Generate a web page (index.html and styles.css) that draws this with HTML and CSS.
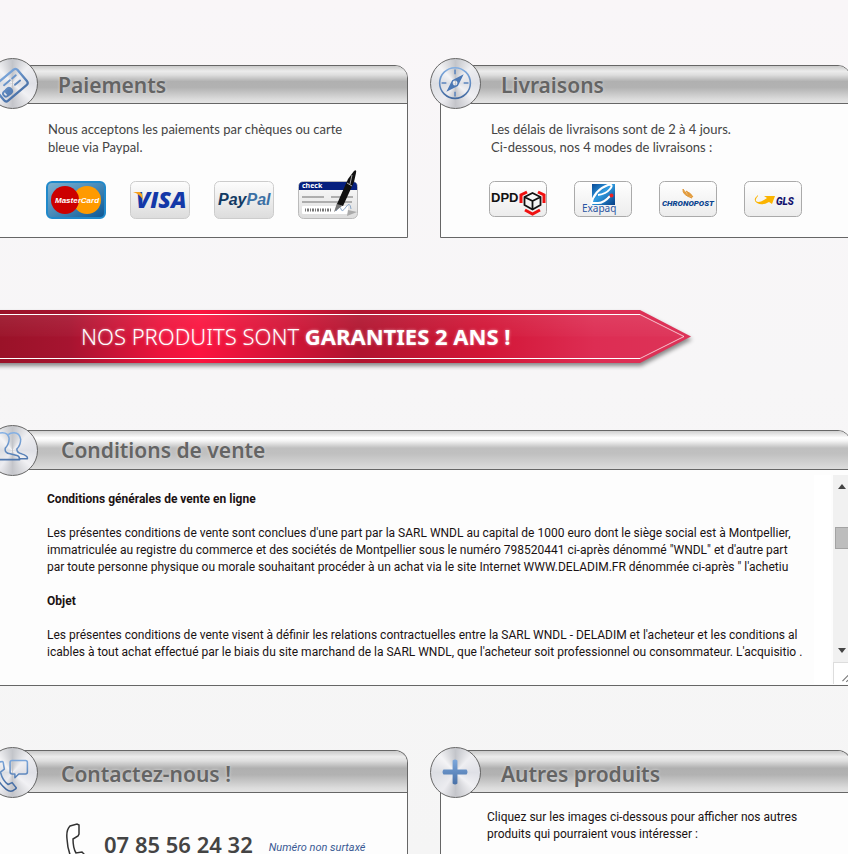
FILE: index.html
```html
<!DOCTYPE html>
<html lang="fr">
<head>
<meta charset="utf-8">
<title>Deladim</title>
<link rel="stylesheet" href="styles.css">
</head>
<body>
<svg class="defs" width="0" height="0" aria-hidden="true">
  <defs>
    <linearGradient id="blue" gradientUnits="userSpaceOnUse" x1="0" y1="8" x2="0" y2="42"><stop offset="0" stop-color="#84b0e4"/><stop offset="1" stop-color="#41689f"/></linearGradient>
    <linearGradient id="card" x1="0" y1="0" x2="0" y2="1"><stop offset="0" stop-color="#fdfdfd"/><stop offset="1" stop-color="#dcdcdc"/></linearGradient>
    <linearGradient id="ship" x1="0" y1="0" x2="0" y2="1"><stop offset="0" stop-color="#fff"/><stop offset="1" stop-color="#ececec"/></linearGradient>
    <linearGradient id="mc" x1="0" y1="0" x2="1" y2="1"><stop offset="0" stop-color="#7fb2d0"/><stop offset=".5" stop-color="#4689b8"/><stop offset="1" stop-color="#0b5694"/></linearGradient>
    <linearGradient id="exa" x1="0" y1="0" x2="1" y2="1"><stop offset="0" stop-color="#0a4a96"/><stop offset=".45" stop-color="#2f9be0"/><stop offset="1" stop-color="#063c83"/></linearGradient>
  </defs>
</svg>
<main class="page">
  <div class="row">
    <section class="panel">
      <header class="bar">
        <span class="badge"><svg viewBox="0 0 51 51"><g fill="none" stroke="url(#blue)" stroke-width="2.4" stroke-linecap="round" transform="rotate(-40 26 26)"><rect x="8" y="15" width="31" height="21" rx="3"/><path d="M18 21h8M29 21h5M27 28h7" stroke-width="2"/><circle cx="14" cy="29" r="3" stroke-width="2"/><circle cx="18" cy="29" r="3" fill="#5681bb"/></g></svg></span>
        <h2>Paiements</h2>
      </header>
      <div class="body">
        <p class="intro">Nous acceptons les paiements par chèques ou carte<br>bleue via Paypal.</p>
        <div class="logos">
          <svg class="pay" viewBox="0 0 60 50" role="img" aria-label="MasterCard"><rect x="1" y="13" width="58" height="36" rx="5" fill="url(#mc)" stroke="#2089cb" stroke-width="2"/><circle cx="41" cy="31" r="14" fill="#ff9a00"/><circle cx="19" cy="31" r="14" fill="#c00"/><text x="9" y="34" class="mc">MasterCard</text></svg>
          <svg class="pay" viewBox="0 0 60 50" role="img" aria-label="Visa"><rect x=".5" y="12.500" width="59" height="37" rx="5" fill="url(#card)" stroke="#ccc"/><text x="6" y="39" class="visa">VISA</text><path d="M3 23h7l2 2 1 6q-3-6-10-8z" fill="#f7a11b"/></svg>
          <svg class="pay" viewBox="0 0 60 50" role="img" aria-label="PayPal"><rect x=".5" y="12.500" width="59" height="37" rx="5" fill="url(#card)" stroke="#ccc"/><text x="4" y="36" class="paypal">Pay<tspan fill="#3b70a5">Pal</tspan></text></svg>
          <svg class="pay" viewBox="0 0 60 50" role="img" aria-label="Chèque"><rect x=".5" y="12.500" width="59" height="37" rx="5" fill="url(#card)" stroke="#bbb"/><path d="M1 21v-4q0-4 4-4h50q4 0 4 4v4z" fill="#06207e"/><text x="4" y="19" class="check">check</text><path d="M4 28h22M33 28h22M4 33h50" stroke="#999" stroke-width="1.400"/><rect x="4" y="37" width="46" height="8" rx="1" fill="#fff"/><path d="M7 41h27" stroke="#777" stroke-width="3" stroke-dasharray="1 1 2 1"/><path d="M38 42q4-6 5-2t5-2 5 2" fill="none" stroke="#8aa7c8"/><path d="M50 41l9 2-10 4z" fill="#aaa"/><path d="M36 43l3-9 5 3z" fill="#777"/><path d="M39 35L50 10l6-8q3-2 2 2l-2 9-11 24z" fill="#111"/><path d="M49 14l5 3M54 6l-2 9" stroke="#aaa"/></svg>
        </div>
      </div>
    </section>
    <section class="panel">
      <header class="bar">
        <span class="badge"><svg viewBox="0 0 51 51"><circle cx="25" cy="25" r="16" fill="none" stroke="url(#blue)" stroke-width="1.600"/><path d="M25 11v5M25 34v5M11 25h5M34 25h5" stroke="#5b84bd" stroke-width="1.600"/><path fill-rule="evenodd" d="M34 16l-6 12-12 6 6-12zM25 22.500a2.500 2.500 0 1 0 .1 0z" fill="#4c78b5"/></svg></span>
        <h2>Livraisons</h2>
      </header>
      <div class="body">
        <p class="intro">Les délais de livraisons sont de 2 à 4 jours.<br>Ci-dessous, nos 4 modes de livraisons :</p>
        <div class="logos ships">
          <svg class="ship" viewBox="0 0 58 36" role="img" aria-label="DPD"><rect x=".5" y=".5" width="57" height="35" rx="5" fill="url(#ship)" stroke="#aaa"/><text x="2" y="21" class="dpd">DPD</text><g fill="none" stroke="#ef1111" stroke-width="3"><path d="M38 11l-6 3v8M49 11l6 3v8M36 29l7.500 4 7.500-4"/></g><path d="M43.500 12l8 4v8l-8 4.500-8-4.500v-8zM35.500 16l8 4 8-4M43.500 20v8" fill="none" stroke="#111" stroke-width="1.800"/></svg>
          <svg class="ship" viewBox="0 0 58 36" role="img" aria-label="Exapaq"><rect x=".5" y=".5" width="57" height="35" rx="5" fill="url(#ship)" stroke="#aaa"/><path d="M18 3h23v21H18z" fill="url(#exa)"/><path d="M17 24q3-15 17-20 6-1 2 4-4 5-12 6M18 22h6q6 0 12-7" fill="none" stroke="#fff" stroke-width="2"/><circle cx="37.500" cy="14.500" r="2" fill="#e22"/><text x="8" y="31" class="exa">Exapaq</text></svg>
          <svg class="ship" viewBox="0 0 58 36" role="img" aria-label="Chronopost"><rect x=".5" y=".5" width="57" height="35" rx="5" fill="url(#ship)" stroke="#aaa"/><path d="M24 8q-1 6 9 9-6-3-9-9zM27 10q2 5 7 6-2-4-7-6z" fill="#e29a3a" stroke="#e29a3a"/><text x="3" y="25" class="chrono">CHRONOPOST</text></svg>
          <svg class="ship" viewBox="0 0 58 36" role="img" aria-label="GLS"><rect x=".5" y=".5" width="57" height="35" rx="5" fill="url(#ship)" stroke="#aaa"/><path d="M14 14q-6 5-1 8t12-1l3 2 3-8H20l3 2q-8 6-11 3-1-2 2-5z" fill="#fbb400"/><text x="32" y="24" class="gls">GLS</text></svg>
        </div>
      </div>
    </section>
  </div>

  <div class="banner">
    <svg class="ribbon" viewBox="0 0 700 64" aria-hidden="true">
      <defs>
        <linearGradient id="red" gradientUnits="userSpaceOnUse" x1="0" y1="0" x2="691" y2="0"><stop offset="0" stop-color="#9a1228"/><stop offset=".1" stop-color="#a61430"/><stop offset=".23" stop-color="#ea143c"/><stop offset=".29" stop-color="#fb143f"/><stop offset=".38" stop-color="#dd1439"/><stop offset=".52" stop-color="#b0142f"/><stop offset=".7" stop-color="#d21536"/><stop offset=".86" stop-color="#dd2d53"/><stop offset="1" stop-color="#dd3358"/></linearGradient>
        <linearGradient id="gloss" x1="0" y1="0" x2="0" y2="1"><stop offset="0" stop-color="#fff" stop-opacity=".08"/><stop offset="1" stop-color="#fff" stop-opacity=".02"/></linearGradient>
      </defs>
      <path class="shape" d="M-10 0H640L691 26.500 640 53H-10z" fill="url(#red)"/>
      <path d="M0 4H640L684 26.500H0z" fill="url(#gloss)"/>
      <path d="M640 4.500L684 26.500 640 48.500" fill="none" stroke="#fff" stroke-opacity=".7"/>
      <path d="M-10 4.500H640M640 48.500H-10" fill="none" stroke="#fff"/>
    </svg>
    <p>NOS PRODUITS SONT <strong>GARANTIES 2 ANS !</strong></p>
  </div>

  <section class="panel terms">
    <header class="bar">
      <span class="badge"><svg viewBox="0 0 51 51"><g fill="none" stroke="url(#blue)" stroke-width="1.600" stroke-linejoin="round"><path d="M0 35q0-5 6-6 7-1 5-6-4-4-3-10 1-6 7-6t7 6q0 6-4 10-1 5 5 6l8 2q2 1 2 4z"/><path d="M21 9q2-2 6-2 6 0 7 7 0 6-4 10 0 4 5 5 6 2 6 4v1h-9"/></g></svg></span>
      <h2>Conditions de vente</h2>
    </header>
    <div class="scroller">
      <div class="text">
        <h3>Conditions générales de vente en ligne</h3>
        <p>Les présentes conditions de vente sont conclues d'une part par la SARL WNDL au capital de 1000 euro dont le siège social est à Montpellier,<br>immatriculée au registre du commerce et des sociétés de Montpellier sous le numéro 798520441 ci-après dénommé "WNDL" et d'autre part<br>par toute personne physique ou morale souhaitant procéder à un achat via le site Internet WWW.DELADIM.FR dénommée ci-après " l'achetiu</p>
        <h3>Objet</h3>
        <p>Les présentes conditions de vente visent à définir les relations contractuelles entre la SARL WNDL - DELADIM et l'acheteur et les conditions al<br>icables à tout achat effectué par le biais du site marchand de la SARL WNDL, que l'acheteur soit professionnel ou consommateur. L'acquisitio .</p>
      </div>
      <div class="track" aria-hidden="true">
        <span class="up"></span>
        <span class="thumb"></span>
        <span class="down"></span>
        <svg class="grip" viewBox="0 0 17 22"><path d="M9 19l8-8M13 20l4-4" stroke="#777" stroke-width="1.200"/></svg>
      </div>
    </div>
  </section>

  <div class="row last">
    <section class="panel">
      <header class="bar">
        <span class="badge"><svg viewBox="0 0 51 51"><g fill="none" stroke="url(#blue)" stroke-width="1.600" stroke-linejoin="round"><path d="M25 13h14q2 0 2 2v10q0 2-2 2h-7l-4 4v-4h-3q-2 0-2-2V15q0-2 2-2z"/><path d="M9 15l6-1q1 0 1 2l1 6-4 3q2 9 8 13l4-2 4 5q1 1-1 2-4 4-9 0Q10 36 7 24q-2-6 2-9z"/></g></svg></span>
        <h2>Contactez-nous !</h2>
      </header>
      <div class="phone">
        <svg viewBox="0 0 20 44" aria-hidden="true"><path d="M5 3l7-2 2 1v9l-1 2-5 3q0 9 3 14l6-1 2 2 1 7-8 4Q3 34 2 16 1 7 5 3z" fill="#fff" stroke="#333" stroke-width="1.500"/></svg>
        <strong>07 85 56 24 32</strong>
        <em>Numéro non surtaxé</em>
      </div>
    </section>
    <section class="panel">
      <header class="bar">
        <span class="badge"><svg viewBox="0 0 51 51"><path d="M22.500 13q2.500-2 5 0v9.500H37q2 2.500 0 5h-9.500V37q-2.500 2-5 0v-9.500H13q-2-2.500 0-5h9.500z" fill="url(#blue)"/></svg></span>
        <h2>Autres produits</h2>
      </header>
      <p class="others">Cliquez sur les images ci-dessous pour afficher nos autres<br>produits qui pourraient vous intéresser :</p>
    </section>
  </div>
</main>
</body>
</html>
```
FILE: styles.css
```css
* { box-sizing: border-box; }
body {
  margin: 0;
  height: 100vh;
  overflow: hidden;
  font-family: Roboto, "Noto Sans", sans-serif;
  font-size: 12px;
  line-height: 17px;
  color: #1a1212;
  background: linear-gradient(#f9f6f8, #f7f6f7 45%, #f5f5f5);
}
.defs { position: absolute; }
h2, h3, p { margin: 0; white-space: nowrap; }
.page {
  height: 100vh;
  margin: 0 -3px;
  padding-top: 65px;
  display: flex;
  flex-direction: column;
}
.row {
  display: grid;
  grid-template-columns: 1fr 1fr;
  gap: 32px;
}
.panel {
  position: relative;
  min-width: 0;
  background: #fdfdfd;
  border: 1px solid #666;
  border-radius: 13px 13px 0 0;
}
.bar {
  height: 38px;
  padding-left: 60px;
  display: flex;
  align-items: center;
  border-bottom: 1px solid #666;
  border-radius: 12px 12px 0 0;
  background: linear-gradient(#c9c9c9, #ececec 14%, #dedede 24%, #b0b0b0 42%, #b2b2b2 58%, #dcdcdc 90%, #e4e4e4);
}
.bar h2 {
  font: 600 21px/30px "Noto Sans", sans-serif;
  color: #646464;
  text-shadow: 0 0 3px #ddd;
}
.badge {
  position: absolute;
  left: -11px;
  top: -8px;
  width: 51px;
  height: 51px;
  border: 1px solid #666;
  border-radius: 50%;
  background: conic-gradient(#c3c5ca, #efeff2 12%, #dfe0e6 25%, #f1f1f4 36%, #c4c5ca 50%, #ececf0 60%, #dcdee3 75%, #f4f4f6 88%, #c3c5ca);
}
.badge svg { display: block; width: 100%; }
.body { padding: 16px 44px 18px 45px; }
.intro { font-family: Lato, "Noto Sans", sans-serif; font-size: 13px; line-height: 18px; padding-left: 5px; color: #444; }
.logos { display: flex; gap: 24px; padding-left: 3px; margin-top: 13px; }
.logos svg { display: block; flex: none; }
.pay { width: 60px; height: 50px; }
.ships { margin-top: 25px; gap: 27px; }
.ship { width: 58px; height: 36px; }
.mc { font: italic 700 8px "Liberation Sans", sans-serif; fill: #fff; }
.visa { font: italic 800 23px "Open Sans", sans-serif; fill: #1338a8; }
.paypal { font: italic 700 16px "Liberation Sans", sans-serif; fill: #123a63; }
.check { font: 700 7px "Noto Sans", sans-serif; fill: #fff; }
.dpd { font: 700 13px "Liberation Sans", sans-serif; fill: #111; }
.exa { font: 10px "Noto Sans", sans-serif; fill: #2b55a2; }
.chrono { font: italic 900 8px "Roboto", sans-serif; fill: #0c4590; }
.gls { font: italic 900 10px "Roboto", sans-serif; fill: #14136e; }
.banner { position: relative; flex: none; height: 53px; margin: 72px 0 67px 3px; display: flex; align-items: center; }
.ribbon { position: absolute; left: 0; top: 0; width: 700px; height: 64px; overflow: visible; }
.shape { filter: drop-shadow(1px 3px 2px rgba(0, 0, 0, 0.45)); }
.banner p {
  position: relative;
  padding: 0 0 2px 81px;
  font: 350 22px/30px "Noto Sans", sans-serif;
  color: #fff;
  text-shadow: 0 0 3px rgba(255, 255, 255, 0.5);
}
.banner strong { font-weight: 700; }
.scroller { display: flex; height: 215px; }
.terms .badge { top: -6px; }
.last .badge { top: -4px; }
.terms .bar, .last .panel:first-child .bar { padding-left: 63px; }
.terms .bar { height: 39px; background: linear-gradient(#d0d0d0, #fff 18%, #f4f4f4 26%, #bfbfbf 45%, #c0c0c0 60%, #dcdcdc); }
.text { flex: 1; min-width: 0; padding: 21px 0 0 49px; }
.text h3 { font-size: 12px; line-height: 17px; font-weight: 700; }
.text p { margin: 17px 0; }
.track {
  flex: none;
  width: 17px;
  margin: 5px 0 1px;
  display: flex;
  flex-direction: column;
  align-items: center;
  background: #f1f1f1;
  box-shadow: -19px 0 0 #fff;
}
.up, .down { border: 4px solid transparent; }
.up { border-top: 0; border-bottom: 5px solid #444; margin-top: 9px; }
.down { border-bottom: 0; border-top: 5px solid #444; margin-bottom: 9px; }
.thumb { width: 14px; height: 22px; margin: 38px 0 auto; background: #bdbdbd; border: 1px solid #a3a3a3; }
.grip { width: 17px; height: 22px; background: #fff; border: solid #ddd; border-width: 1px 0 0 1px; }
.last { flex: 1; min-height: 0; margin-top: 64px; }
.last .panel { border-bottom: 0; }
.last .bar { height: 42px; padding-top: 4px; }
.phone { display: flex; align-items: center; padding: 30px 0 0 67px; white-space: nowrap; }
.phone svg { width: 20px; height: 44px; margin-right: 19px; }
.phone strong { font: 600 22px/24px "Noto Sans", sans-serif; color: #444; margin-right: 16px; padding-bottom: 2px; }
.phone em { font-size: 11px; line-height: 15px; color: #3a5a94; margin-top: 4px; }
.others { padding: 16px 0 0 46px; }
```
